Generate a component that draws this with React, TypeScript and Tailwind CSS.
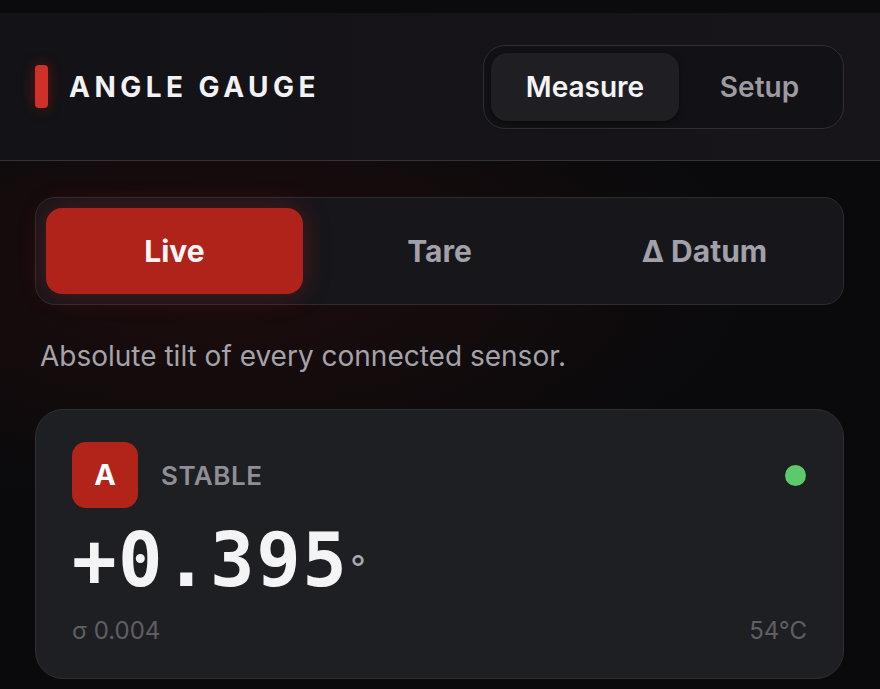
import { useState } from "react";

type Mode = "live" | "tare" | "datum";

const modes: { id: Mode; label: string; hint: string }[] = [
  { id: "live", label: "Live", hint: "Absolute tilt of every connected sensor." },
  { id: "tare", label: "Tare", hint: "Tilt relative to the last zero point." },
  { id: "datum", label: "Δ Datum", hint: "Difference against the datum sensor." },
];

function SensorCard() {
  return (
    <div className="rounded-[28px] border border-[#2e2f35] bg-[#1e1f23] px-9 pt-8 pb-[32px]">
      <div className="flex items-center">
        <div className="flex h-[66px] w-[66px] items-center justify-center rounded-[14px] bg-[#b2241a] text-[29px] font-bold text-white">
          A
        </div>
        <span className="ml-[23px] text-[26px] font-semibold tracking-[0.02em] text-[#8f8e96]">STABLE</span>
        <span className="ml-auto mr-px h-[21px] w-[21px] rounded-full bg-[#5cc96c]" />
      </div>
      <div className="mt-[12px] flex items-start">
        <span className="font-['DejaVu_Sans_Mono',monospace] text-[74px] font-bold leading-[80px] tracking-[0.02em] text-[#f4f4f7]">
          +0.395
        </span>
        <span className="ml-[2px] mt-[28px] text-[34px] leading-[40px] text-[#a9a9b1]">°</span>
      </div>
      <div className="mt-[16px] flex items-center justify-between text-[24px] leading-[30px] text-[#5f5e66]">
        <span>σ 0.004</span>
        <span>54°C</span>
      </div>
    </div>
  );
}

export default function App() {
  const [tab, setTab] = useState<"measure" | "setup">("measure");
  const [mode, setMode] = useState<Mode>("live");
  const hint = modes.find((m) => m.id === mode)?.hint;

  return (
    <div className="h-[689px] w-[880px] overflow-hidden bg-[#0a0a0c] font-['Inter',sans-serif]">
      <div className="h-[13px] bg-[#0b0b0e]" />
      <header className="flex h-[148px] items-center border-b border-[#34333a] bg-[linear-gradient(90deg,#131216,#17151a)] pl-[35px] pr-[36px]">
        <span className="h-[43px] w-[13px] rounded-[4px] bg-[#d0302a] shadow-[0_0_14px_rgba(220,40,30,0.35)]" />
        <h1 className="ml-[21px] text-[28px] font-bold tracking-[0.16em] text-[#f2f2f5]">ANGLE GAUGE</h1>
        <div className="ml-auto flex h-[84px] w-[361px] gap-[4px] rounded-[22px] border border-[#2f2e35] bg-[#121115] p-[7px]">
          <button
            onClick={() => setTab("measure")}
            className={`w-[188px] rounded-[16px] text-[28px] font-semibold ${
              tab === "measure" ? "bg-[#1f1f23] text-[#f4f4f7] shadow-[0_2px_6px_rgba(0,0,0,0.5)]" : "text-[#9c9aa2]"
            }`}
          >
            Measure
          </button>
          <button
            onClick={() => setTab("setup")}
            className={`flex-1 rounded-[16px] text-[28px] font-semibold ${
              tab === "setup" ? "bg-[#1f1f23] text-[#f4f4f7]" : "text-[#9c9aa2]"
            }`}
          >
            Setup
          </button>
        </div>
      </header>

      <main className="bg-[radial-gradient(ellipse_60%_45%_at_25%_22%,#1d0c0d,transparent)] px-[35px] pr-[36px] pt-[36px]">
        <div className="grid h-[108px] grid-cols-3 gap-[8px] rounded-[20px] border border-[#2d2c33] bg-[#16161b] p-[10px]">
          {modes.map((m) => (
            <button
              key={m.id}
              onClick={() => setMode(m.id)}
              className={`rounded-[16px] text-[30px] font-bold ${
                mode === m.id
                  ? "bg-[#b0231a] text-[#f6f6f8] shadow-[0_0_26px_rgba(190,35,25,0.35)]"
                  : "text-[#a2a1a9]"
              }`}
            >
              {m.label}
            </button>
          ))}
        </div>

        <p className="mt-[33px] ml-[5px] text-[28px] leading-[36px] text-[#a4a3ab]">{hint}</p>

        <div className="mt-[35px]">
          <SensorCard />
        </div>
      </main>
    </div>
  );
}
